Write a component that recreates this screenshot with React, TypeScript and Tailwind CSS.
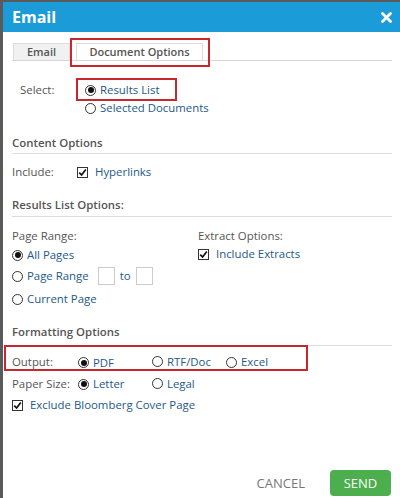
import React from "react";

const Radio = ({ checked }: { checked?: boolean }) => (
  <span className="inline-flex h-[11px] w-[11px] shrink-0 items-center justify-center rounded-full border border-[#333] bg-white">
    {checked && <span className="h-[6px] w-[6px] rounded-full bg-[#111]" />}
  </span>
);

const Check = () => (
  <span className="inline-flex h-[11px] w-[11px] shrink-0 items-center justify-center border border-[#333] bg-white">
    <svg width="9" height="9" viewBox="0 0 9 9">
      <path d="M1.2 4.6 L3.6 7 L7.8 1.4" fill="none" stroke="#111" strokeWidth="1.7" />
    </svg>
  </span>
);

const Option = ({ checked, label, box }: { checked?: boolean; label: string; box?: boolean }) => (
  <span className={`inline-flex items-center ${box ? "gap-[7px]" : "gap-[4px]"}`}>
    {box ? <Check /> : <Radio checked={checked} />}
    <span className="text-[#24598a]">{label}</span>
  </span>
);

const App = () => {
  return (
    <div
      className="relative h-[498px] w-[400px] overflow-hidden border-l-[3px] border-t-2 border-[#5a5a5a] bg-white text-[11.4px] leading-[16px] text-[#555]"
      style={{ fontFamily: '"Open Sans", "Noto Sans", sans-serif' }}
    >
      <div className="flex h-[30px] items-center justify-between bg-[#1b9bd7] pl-[9px] pr-[8px]">
        <span className="text-[16px] font-bold text-white">Email</span>
        <svg width="11" height="11" viewBox="0 0 11 11">
          <path d="M1.5 1.5 L9.5 9.5 M9.5 1.5 L1.5 9.5" stroke="#fff" strokeWidth="2.8" strokeLinecap="round" />
        </svg>
      </div>

      <div className="pl-[9px] pr-[8px]">
        {/* tabs */}
        <div className="mt-[11px] flex items-end gap-[6px] border-b border-[#d6d6d6] pl-[1px]">
          <div className="flex h-[17px] w-[57px] items-center justify-center border border-b-0 border-[#ddd] bg-[#f1f1f1] text-[11px] font-semibold text-[#555]">
            Email
          </div>
          <div className="flex h-[17px] w-[127px] items-center justify-center border border-b-0 border-[#ddd] bg-white text-[11px] font-semibold text-[#555]">
            Document Options
          </div>
        </div>

        {/* select */}
        <div className="mt-[21px] flex">
          <span className="ml-[8px] w-[65px]">Select:</span>
          <div className="flex flex-col gap-[2px]">
            <Option checked label="Results List" />
            <Option label="Selected Documents" />
          </div>
        </div>

        <div className="mt-[19px] border-b border-[#dcdcdc] pb-[2px] font-semibold">Content Options</div>
        <div className="mt-[10px] flex">
          <span className="w-[65px]">Include:</span>
          <Option box label="Hyperlinks" />
        </div>

        <div className="mt-[17px] border-b border-[#dcdcdc] pb-[3px] font-semibold">Results List Options:</div>
        <div className="mt-[11px] grid grid-cols-[186px_1fr]">
          <div className="flex flex-col">
            <span>Page Range:</span>
            <span className="mt-[2px]"><Option checked label="All Pages" /></span>
            <div className="mt-[4px] flex h-[18px] items-center">
              <Option label="Page Range" />
              <span className="ml-[9px] h-[18px] w-[17px] border border-[#ccc]" />
              <span className="mx-[5px] text-[#24598a]">to</span>
              <span className="h-[18px] w-[17px] border border-[#ccc]" />
            </div>
            <span className="mt-[6px]"><Option label="Current Page" /></span>
          </div>
          <div className="flex flex-col">
            <span>Extract Options:</span>
            <span className="mt-[2px]"><Option box label="Include Extracts" /></span>
          </div>
        </div>

        <div className="mt-[15px] border-b border-[#dcdcdc] pb-[5px] font-semibold">Formatting Options</div>
        <div className="mt-[8px] flex items-center">
          <span className="w-[66px]">Output:</span>
          <span className="w-[74px]"><Option checked label="PDF" /></span>
          <span className="w-[74px]"><Option label="RTF/Doc" /></span>
          <Option label="Excel" />
        </div>
        <div className="mt-[4px] flex items-center">
          <span className="w-[66px]">Paper Size:</span>
          <span className="w-[74px]"><Option checked label="Letter" /></span>
          <Option label="Legal" />
        </div>
        <div className="mt-[5px]">
          <Option box label="Exclude Bloomberg Cover Page" />
        </div>
      </div>

      {/* red annotation boxes */}
      <div className="pointer-events-none absolute left-[67px] top-[36px] h-[29px] w-[140px] border-2 border-[#c8272d]" />
      <div className="pointer-events-none absolute left-[73px] top-[76px] h-[23px] w-[101px] border-2 border-[#c8272d]" />
      <div className="pointer-events-none absolute left-[1px] top-[343px] h-[26px] w-[304px] border-2 border-[#c8272d]" />

      <div className="absolute bottom-[2px] right-[9px] flex items-center gap-[25px]">
        <span className="text-[13px] text-[#777]">CANCEL</span>
        <span className="flex h-[26px] w-[61px] items-center justify-center rounded-[4px] bg-[#4cae4c] text-[13px] text-white">
          SEND
        </span>
      </div>
    </div>
  );
};

export default App;
